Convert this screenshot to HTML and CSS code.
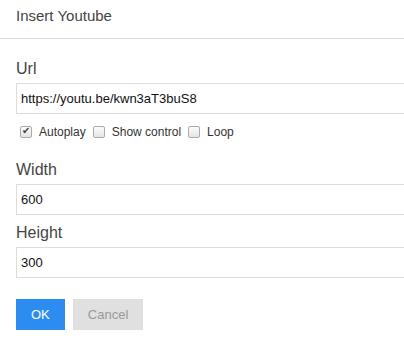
FILE: index.html
```html
<!DOCTYPE html>
<html lang="en">
<head>
  <meta charset="UTF-8">
  <title>Insert Youtube</title>
  <link rel="stylesheet" href="styles.css">
</head>
<body>
  <div class="dialog">
    <div class="dialog-title">Insert Youtube</div>
    <div class="dialog-body">
      <div class="field">
        <label class="field-label">Url</label>
        <input class="field-input" type="text" value="https://youtu.be/kwn3aT3buS8">
      </div>
      <div class="options">
        <label class="option"><input type="checkbox" checked> Autoplay</label>
        <label class="option"><input type="checkbox"> Show control</label>
        <label class="option"><input type="checkbox"> Loop</label>
      </div>
      <div class="field field-gap">
        <label class="field-label">Width</label>
        <input class="field-input" type="text" value="600">
      </div>
      <div class="field field-next">
        <label class="field-label">Height</label>
        <input class="field-input" type="text" value="300">
      </div>
      <div class="actions">
        <button class="btn btn-ok">OK</button>
        <button class="btn btn-cancel">Cancel</button>
      </div>
    </div>
  </div>
</body>
</html>
```

FILE: styles.css
```css
body {
  margin: 0;
  font-family: "Liberation Sans", Arial, sans-serif;
  background: #fff;
  overflow: hidden;
}

.dialog {
  width: 620px;
}

.dialog-title {
  height: 38px;
  line-height: 32px;
  padding-left: 16px;
  font-size: 15px;
  color: #444;
  border-bottom: 1px solid #ddd;
}

.dialog-body {
  padding: 16px 16px 0;
}

.field {
  display: flex;
  flex-direction: column;
}

.field-gap {
  margin-top: 17px;
}

.field-next {
  margin-top: 4px;
}

.field-label {
  font-size: 16px;
  color: #444;
  line-height: 28px;
}

.field-input {
  height: 31px;
  box-sizing: border-box;
  border: 1px solid #ddd;
  padding: 0 4px;
  font-family: "Liberation Sans", Arial, sans-serif;
  font-size: 13px;
  color: #111;
  margin: 0;
}

.options {
  display: flex;
  height: 14px;
  margin-top: 11px;
  font-size: 12px;
  color: #333;
}

.option {
  display: flex;
  align-items: center;
  margin-right: 3px;
}

.option input {
  appearance: none;
  -webkit-appearance: none;
  position: relative;
  box-sizing: border-box;
  width: 12px;
  height: 12px;
  margin: 0 7px 0 4px;
  border: 1px solid #aaa;
  border-radius: 2px;
  background: linear-gradient(#fcfcfc, #e4e4e4);
}

.option input:checked::after {
  content: "\2714";
  position: absolute;
  left: 1px;
  top: -2px;
  font-size: 10px;
  color: #444;
}

.actions {
  display: flex;
  gap: 8px;
  margin-top: 21px;
}

.btn {
  height: 31px;
  border: none;
  font-family: "Liberation Sans", Arial, sans-serif;
  font-size: 13px;
  padding: 0 15px;
}

.btn-ok {
  background: #2d8cf0;
  color: #fff;
}

.btn-cancel {
  background: #e0e0e0;
  color: #999;
}
```
